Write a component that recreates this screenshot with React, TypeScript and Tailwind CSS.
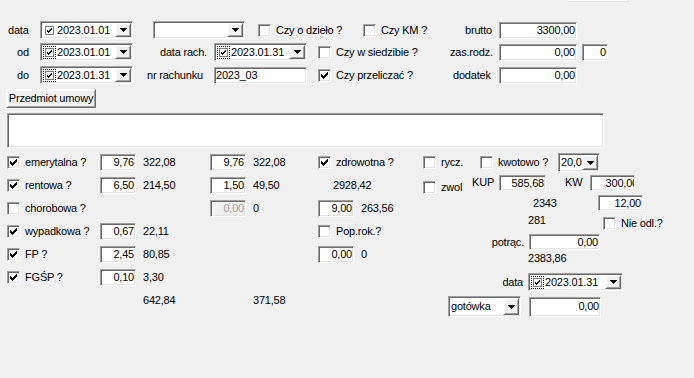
import React from "react";

// classic 3D borders
const sunken =
  "border border-t-[#a0a0a0] border-l-[#a0a0a0] border-b-white border-r-white shadow-[inset_1px_1px_0_#696969,inset_-1px_-1px_0_#e3e3e3]";
const raised =
  "border border-t-white border-l-white border-b-[#696969] border-r-[#696969] shadow-[inset_1px_1px_0_#f8f8f8,inset_-1px_-1px_0_#a0a0a0]";

function Tick() {
  return (
    <svg width="7" height="7" viewBox="0 0 7 7" shapeRendering="crispEdges">
      <path
        d="M6 0h1v1h-1z M5 1h2v1h-2z M0 2h1v1h-1z M4 2h3v1h-3z M0 3h2v1h-2z M3 3h3v1h-3z M0 4h5v1h-5z M1 5h3v1h-3z M2 6h1v1h-1z"
        fill="#000"
      />
    </svg>
  );
}

function SmallTick() {
  return (
    <svg width="5" height="5" viewBox="0 0 5 5" shapeRendering="crispEdges">
      <path
        d="M4 0h1v1h-1z M3 1h2v1h-2z M0 2h1v1h-1z M2 2h2v1h-2z M0 3h3v1h-3z M1 4h1v1h-1z"
        fill="#000"
      />
    </svg>
  );
}

function Check({
  checked = false,
  label,
  className = "",
}: {
  checked?: boolean;
  label?: string;
  className?: string;
}) {
  return (
    <div className={`flex items-center gap-[5px] shrink-0 ${className}`}>
      <span
        className={`w-[13px] h-[13px] bg-white flex items-center justify-center shrink-0 ${sunken}`}
      >
        {checked && <Tick />}
      </span>
      {label && <span className="whitespace-nowrap">{label}</span>}
    </div>
  );
}

function Edit({
  value = "",
  className = "",
  left = false,
  disabled = false,
  clip = false,
}: {
  value?: string;
  className?: string;
  left?: boolean;
  disabled?: boolean;
  clip?: boolean;
}) {
  return (
    <div
      className={`shrink-0 flex items-center overflow-hidden ${
        left ? "justify-start pl-[1px]" : "justify-end pr-[1px]"
      } ${disabled ? "bg-[#f0f0f0] text-[#a0a0a0]" : "bg-white"} ${sunken} ${className}`}
    >
      <span className={`whitespace-nowrap ${clip ? "-mr-[5px]" : ""}`}>{value}</span>
    </div>
  );
}

function DropBtn({ className = "w-[16px]" }: { className?: string }) {
  return (
    <span
      className={`shrink-0 self-stretch my-[1px] mr-[1px] bg-[#f0f0f0] flex items-center justify-center ${raised} ${className}`}
    >
      <svg width="7" height="4" viewBox="0 0 7 4" shapeRendering="crispEdges">
        <path d="M0 0h7v1h-1v1h-1v1h-1v1h-1v-1h-1v-1h-1v-1h-1z" fill="#000" />
      </svg>
    </span>
  );
}

function DatePick({
  value,
  focus = false,
  className = "",
}: {
  value: string;
  focus?: boolean;
  className?: string;
}) {
  return (
    <div className={`shrink-0 flex items-center bg-white ${sunken} ${className}`}>
      <span
        className={`ml-[4px] w-[9px] h-[9px] border border-[#7a7a7a] bg-white flex items-center justify-center shrink-0 ${
          focus ? "outline-1 outline-dotted outline-black outline-offset-[1px]" : ""
        }`}
      >
        <SmallTick />
      </span>
      <span className="ml-[3px] flex-1 whitespace-nowrap">{value}</span>
      <DropBtn />
    </div>
  );
}

function Combo({ value = "", className = "" }: { value?: string; className?: string }) {
  return (
    <div className={`shrink-0 flex items-center bg-white ${sunken} ${className}`}>
      <span className="pl-[2px] flex-1 whitespace-nowrap overflow-hidden">{value}</span>
      <DropBtn />
    </div>
  );
}

type Skladka = {
  label?: string;
  checked?: boolean;
  rate?: string;
  amount?: string;
  rate2?: string;
  disabled2?: boolean;
  amount2?: string;
  extra?: React.ReactNode;
};

const skladki: Skladka[] = [
  {
    label: "emerytalna ?",
    checked: true,
    rate: "9,76",
    amount: "322,08",
    rate2: "9,76",
    amount2: "322,08",
    extra: <Check checked label="zdrowotna ?" />,
  },
  {
    label: "rentowa ?",
    checked: true,
    rate: "6,50",
    amount: "214,50",
    rate2: "1,50",
    amount2: "49,50",
    extra: <span className="pl-[15px]">2928,42</span>,
  },
  {
    label: "chorobowa ?",
    checked: false,
    rate2: "0,00",
    disabled2: true,
    amount2: "0",
    extra: (
      <>
        <Edit value="9,00" className="w-[36px] h-[17px]" />
        <span className="pl-[7px]">263,56</span>
      </>
    ),
  },
  {
    label: "wypadkowa ?",
    checked: true,
    rate: "0,67",
    amount: "22,11",
    extra: <Check label="Pop.rok.?" />,
  },
  {
    label: "FP ?",
    checked: true,
    rate: "2,45",
    amount: "80,85",
    extra: (
      <>
        <Edit value="0,00" className="w-[36px] h-[17px]" />
        <span className="pl-[7px]">0</span>
      </>
    ),
  },
  { label: "FGŚP ?", checked: true, rate: "0,10", amount: "3,30" },
  { amount: "642,84", amount2: "371,58" },
];

export default function App() {
  return (
    <div className="w-[694px] h-[378px] bg-[#f0f0f0] overflow-hidden text-black text-[11px] leading-[13px] tracking-[-0.2px] font-['Liberation_Sans',Arial,sans-serif]">
      {/* bottom edge of a control above the visible area */}
      <div className="ml-[568px] w-[60px] h-[2px] bg-white border-b border-r border-[#e3e3e3]" />

      {/* row: data */}
      <div className="mt-[19px] h-[18px] flex items-center">
        <span className="w-[40px] pl-[8px] shrink-0">data</span>
        <DatePick value="2023.01.01" className="w-[93px] h-[18px]" />
        <Combo className="ml-[20px] w-[92px] h-[18px]" />
        <Check label="Czy o dzieło ?" className="ml-[13px] w-[105px]" />
        <Check label="Czy KM ?" className="w-[102px]" />
        <span className="w-[34px] shrink-0">brutto</span>
        <Edit value="3300,00" className="w-[78px] h-[17px]" />
      </div>

      {/* row: od */}
      <div className="mt-[4px] h-[18px] flex items-center">
        <span className="w-[40px] pl-[17px] shrink-0">od</span>
        <DatePick value="2023.01.01" focus className="w-[93px] h-[18px]" />
        <span className="w-[81px] pl-[27px] shrink-0 whitespace-nowrap">data rach.</span>
        <DatePick value="2023.01.31" focus className="w-[93px] h-[18px]" />
        <Check label="Czy w siedzibie ?" className="ml-[11px] w-[132px]" />
        <span className="w-[49px] shrink-0">zas.rodz.</span>
        <Edit value="0,00" className="w-[78px] h-[17px]" />
        <Edit value="0" className="ml-[5px] w-[26px] h-[17px]" />
      </div>

      {/* row: do */}
      <div className="mt-[5px] h-[18px] flex items-center">
        <span className="w-[40px] pl-[17px] shrink-0">do</span>
        <DatePick value="2023.01.31" focus className="w-[93px] h-[18px]" />
        <span className="w-[81px] pl-[14px] shrink-0 whitespace-nowrap">nr rachunku</span>
        <Edit value="2023_03" left className="w-[93px] h-[17px]" />
        <Check checked label="Czy przeliczać ?" className="ml-[11px] w-[135px]" />
        <span className="w-[46px] shrink-0">dodatek</span>
        <Edit value="0,00" className="w-[78px] h-[17px]" />
      </div>

      <div
        className={`mt-[5px] ml-[6px] w-[90px] h-[19px] flex items-center justify-center bg-[#f0f0f0] ${raised}`}
      >
        Przedmiot umowy
      </div>

      {/* memo */}
      <div className={`mt-[5px] ml-[7px] w-[597px] h-[35px] bg-white ${sunken}`} />

      <div className="mt-[1px] flex">
        {/* składki */}
        <div className="w-[420px] shrink-0 pt-[2px] flex flex-col">
          {skladki.map((s, i) => (
            <div key={i} className="h-[23px] flex items-center">
              <div className="w-[100px] pl-[7px] shrink-0">
                {s.label && <Check checked={s.checked} label={s.label} />}
              </div>
              <div className="w-[36px] shrink-0">
                {s.rate && <Edit value={s.rate} className="w-[36px] h-[17px]" />}
              </div>
              <span className="w-[74px] pl-[7px] shrink-0">{s.amount}</span>
              <div className="w-[36px] shrink-0">
                {s.rate2 && (
                  <Edit value={s.rate2} disabled={s.disabled2} className="w-[36px] h-[17px]" />
                )}
              </div>
              <span className="w-[72px] pl-[7px] shrink-0">{s.amount2}</span>
              <div className="flex items-center">{s.extra}</div>
            </div>
          ))}
        </div>

        {/* podatek */}
        <div className="flex-1 pt-[4px] flex flex-col">
          <div className="h-[19px] flex items-center pl-[3px]">
            <Check label="rycz." className="w-[57px]" />
            <Check label="kwotowo ?" className="w-[78px]" />
            <Combo value="20,0" className="w-[42px] h-[19px]" />
          </div>

          <div className="mt-[3px] h-[20px] flex items-start">
            <div className="w-[52px] pl-[3px] pt-[6px] shrink-0">
              <Check label="zwol" />
            </div>
            <span className="w-[27px] pt-[1px] shrink-0">KUP</span>
            <Edit value="585,68" className="w-[47px] h-[16px]" />
            <span className="ml-[19px] w-[25px] pt-[1px] shrink-0">KW</span>
            <Edit value="300,00" clip className="w-[45px] h-[16px]" />
          </div>

          <div className="h-[16px] flex items-center">
            <span className="pl-[113px] w-[178px] shrink-0">2343</span>
            <Edit value="12,00" className="w-[45px] h-[16px]" />
          </div>

          <div className="h-[22px] flex items-start">
            <span className="pl-[108px] w-[183px] pt-[3px] shrink-0">281</span>
            <Check label="Nie odl.?" className="pt-[6px]" />
          </div>

          <div className="mt-[1px] h-[16px] flex items-center">
            <span className="w-[104px] text-right shrink-0">potrąc.</span>
            <Edit value="0,00" className="ml-[5px] w-[71px] h-[16px]" />
          </div>

          <div className="h-[16px] flex items-center">
            <span className="pl-[108px]">2383,86</span>
          </div>

          <div className="mt-[7px] h-[18px] flex items-center">
            <span className="w-[103px] text-right shrink-0">data</span>
            <DatePick value="2023.01.31" focus className="ml-[5px] w-[95px] h-[18px]" />
          </div>

          <div className="mt-[5px] h-[21px] flex items-center">
            <Combo value="gotówka" className="ml-[28px] w-[73px] h-[21px]" />
            <Edit value="0,00" className="ml-[8px] w-[72px] h-[20px]" />
          </div>
        </div>
      </div>
    </div>
  );
}
